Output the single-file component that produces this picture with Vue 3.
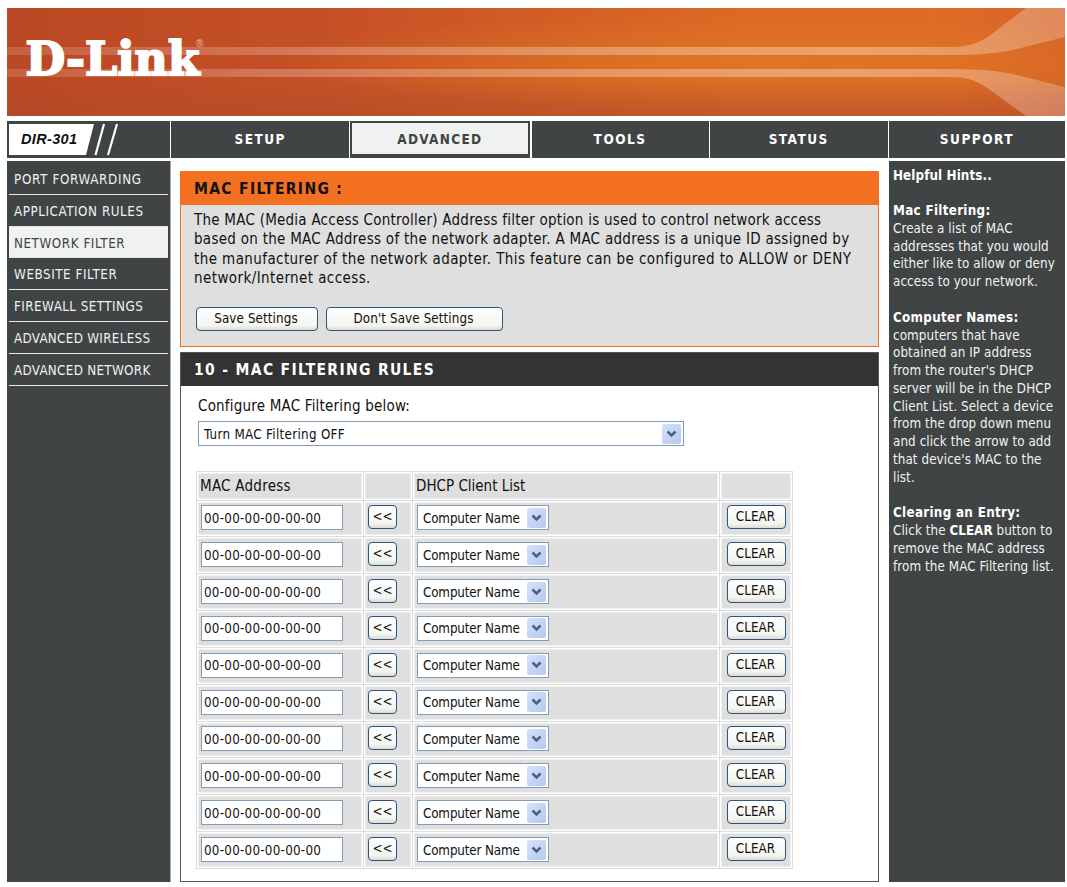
<script setup>
import { ref } from 'vue'

const tabs = ['SETUP', 'ADVANCED', 'TOOLS', 'STATUS', 'SUPPORT']
const activeTab = ref('ADVANCED')

const menu = [
  'PORT FORWARDING',
  'APPLICATION RULES',
  'NETWORK FILTER',
  'WEBSITE FILTER',
  'FIREWALL SETTINGS',
  'ADVANCED WIRELESS',
  'ADVANCED NETWORK'
]
const activeMenu = ref('NETWORK FILTER')

const description = [
  'The MAC (Media Access Controller) Address filter option is used to control network access',
  'based on the MAC Address of the network adapter. A MAC address is a unique ID assigned by',
  'the manufacturer of the network adapter. This feature can be configured to ALLOW or DENY',
  'network/Internet access.'
]

const rules = ref(
  Array.from({ length: 10 }, (_, i) => ({ id: i + 1, mac: '00-00-00-00-00-00' }))
)

const clearRule = (rule) => {
  rule.mac = '00-00-00-00-00-00'
}
</script>

<template>
  <div class="page">
    <header class="banner">
      <svg width="1058" height="108" viewBox="0 0 1058 108">
        <defs>
          <linearGradient id="base" x1="0" y1="0" x2="1" y2="0">
            <stop offset="0" stop-color="#ba4824" />
            <stop offset="0.3" stop-color="#c65026" />
            <stop offset="0.7" stop-color="#dc6a25" />
            <stop offset="0.88" stop-color="#de6b26" />
            <stop offset="1" stop-color="#d66428" />
          </linearGradient>
          <radialGradient id="glow" cx="0.7" cy="0.5" r="0.45">
            <stop offset="0" stop-color="#e27a22" stop-opacity="0.7" />
            <stop offset="1" stop-color="#e27a22" stop-opacity="0" />
          </radialGradient>
          <linearGradient id="shade" x1="0" y1="0" x2="0" y2="1">
            <stop offset="0.65" stop-color="#b04c2a" stop-opacity="0" />
            <stop offset="1" stop-color="#b04c2a" stop-opacity="0.6" />
          </linearGradient>
          <linearGradient id="beam" x1="0" y1="0" x2="1" y2="0">
            <stop offset="0" stop-color="#fff" stop-opacity="0.14" />
            <stop offset="0.3" stop-color="#fff" stop-opacity="0.24" />
            <stop offset="0.8" stop-color="#fff" stop-opacity="0.34" />
            <stop offset="1" stop-color="#fff" stop-opacity="0.24" />
          </linearGradient>
        </defs>
        <rect width="1058" height="108" fill="url(#base)" />
        <rect width="1058" height="108" fill="url(#glow)" />
        <rect width="1058" height="108" fill="url(#shade)" />
        <path d="M0 39H945C963 39 974 34 986 25L1019 0H1058V29L1010 41Q985 47 945 47H0Z" fill="url(#beam)" />
        <path d="M0 69H945C963 69 974 75 986 84L1019 108H1058V79L1010 67Q985 61 945 61H0Z" fill="url(#beam)" />
        <text class="logo" x="18.5" y="66.5" textLength="174" lengthAdjust="spacingAndGlyphs">D-Link</text>
        <text class="reg" x="189" y="39">®</text>
      </svg>
    </header>

    <nav class="tabs">
      <div class="model">
        <svg width="163" height="37" viewBox="0 0 163 37">
          <path d="M2 3H87L79 34H2Z" fill="#fff" />
          <path d="M97 3L88.5 34M110 3L101 34" stroke="#fff" stroke-width="2.2" />
          <text class="model-name" x="14" y="23" textLength="56">DIR-301</text>
        </svg>
      </div>
      <a
        v-for="tab in tabs"
        :key="tab"
        class="tab"
        :class="{ active: tab === activeTab }"
        @click="activeTab = tab"
      >
        <span>{{ tab }}</span>
      </a>
    </nav>

    <div class="columns">
      <aside class="sidebar">
        <a
          v-for="item in menu"
          :key="item"
          class="menu-item"
          :class="{ active: item === activeMenu }"
          @click="activeMenu = item"
        >{{ item }}</a>
      </aside>

      <main class="content">
        <section class="intro">
          <h1>MAC FILTERING :</h1>
          <div class="intro-body">
            <p>
              <span v-for="(line, i) in description" :key="i" class="line">{{ line }}</span>
            </p>
            <div class="intro-actions">
              <button class="btn save">Save Settings</button>
              <button class="btn discard">Don't Save Settings</button>
            </div>
          </div>
        </section>

        <section class="rules">
          <h2>10 - MAC FILTERING RULES</h2>
          <div class="rules-body">
            <div class="label">Configure MAC Filtering below:</div>
            <div class="select mode">
              <span>Turn MAC Filtering OFF</span>
              <i class="arrow">
                <svg width="11" height="8" viewBox="0 0 11 8">
                  <path d="M1.5 1.5L5.5 5.5L9.5 1.5" />
                </svg>
              </i>
            </div>

            <div class="table">
              <div class="row head">
                <div class="cell">MAC Address</div>
                <div class="cell"></div>
                <div class="cell">DHCP Client List</div>
                <div class="cell"></div>
              </div>
              <div v-for="rule in rules" :key="rule.id" class="row">
                <div class="cell"><input v-model="rule.mac" class="mac" /></div>
                <div class="cell"><button class="btn copy">&lt;&lt;</button></div>
                <div class="cell">
                  <div class="select client">
                    <span>Computer Name</span>
                    <i class="arrow">
                      <svg width="11" height="8" viewBox="0 0 11 8">
                        <path d="M1.5 1.5L5.5 5.5L9.5 1.5" />
                      </svg>
                    </i>
                  </div>
                </div>
                <div class="cell"><button class="btn clear" @click="clearRule(rule)">CLEAR</button></div>
              </div>
            </div>
          </div>
        </section>
      </main>

      <aside class="hints">
        <b>Helpful Hints..</b><br /><br />
        <b>Mac Filtering:</b><br />
        Create a list of MAC<br />
        addresses that you would<br />
        either like to allow or deny<br />
        access to your network.<br /><br />
        <b>Computer Names:</b><br />
        computers that have<br />
        obtained an IP address<br />
        from the router's DHCP<br />
        server will be in the DHCP<br />
        Client List. Select a device<br />
        from the drop down menu<br />
        and click the arrow to add<br />
        that device's MAC to the<br />
        list.<br /><br />
        <b>Clearing an Entry:</b><br />
        Click the <b class="inline">CLEAR</b> button to<br />
        remove the MAC address<br />
        from the MAC Filtering list.
      </aside>
    </div>
  </div>
</template>

<style>
body {
  background: #fff;
}
</style>

<style scoped>
* {
  box-sizing: border-box;
}

.page {
  width: 1067px;
  height: 887px;
  padding: 8px 2px 5px 7px;
  overflow: hidden;
  background: #fff;
  color: #111;
  font-family: Tahoma, 'DejaVu Sans Condensed', 'DejaVu Sans', sans-serif;
  font-stretch: condensed;
  white-space: nowrap;
}

.banner {
  height: 108px;
}

.banner svg,
.model svg {
  display: block;
}

.logo {
  font: bold 46px 'DejaVu Serif', serif;
  fill: #fff;
  stroke: #fff;
  stroke-width: 2px;
}

.reg {
  font: 10px 'Liberation Sans', sans-serif;
  fill: #e9b8a2;
}

.tabs {
  display: grid;
  grid-template-columns: 163px 178px 180px 177px 178px 176px;
  column-gap: 1.2px;
  height: 37px;
  margin-top: 5px;
}

.model,
.tab {
  background: #404444;
}

.model-name {
  font: italic bold 14.5px 'Liberation Sans', sans-serif;
  fill: #111;
}

.tab {
  display: flex;
  align-items: center;
  justify-content: center;
  padding-bottom: 1px;
  color: #fff;
  font-size: 13.5px;
  font-weight: bold;
  letter-spacing: 1.5px;
  cursor: pointer;
}

.tab.active {
  padding: 0 1px 0 0;
  border: 2px solid #404444;
  border-bottom-width: 4px;
  background: #f0f2f1;
  color: #404444;
  letter-spacing: 1.3px;
}

.columns {
  display: flex;
  height: 721px;
  margin-top: 3px;
}

.sidebar {
  width: 163px;
  padding: 2px 2px 0;
  background: #404444;
}

.menu-item {
  display: block;
  height: 31.8px;
  padding-left: 5px;
  border-bottom: 1px solid #e4e6e5;
  color: #f0f2f1;
  font-size: 13.3px;
  line-height: 33px;
  letter-spacing: 0.55px;
  cursor: pointer;
}

.menu-item:first-child {
  letter-spacing: 0.67px;
}

.menu-item:nth-child(5) {
  letter-spacing: 0.45px;
}

.menu-item:nth-child(n + 6) {
  letter-spacing: 0.3px;
}

.menu-item.active {
  background: #f0f2f1;
  color: #404444;
}

.content {
  width: 719px;
  padding: 10px 10px 0 9px;
  border-left: 1px solid #a8a8a8;
}

.intro {
  height: 176px;
  border: 1px solid #f37021;
  background: #dfdfdf;
}

.intro h1,
.rules h2 {
  margin: 0;
  height: 33px;
  padding-left: 13px;
  font-size: 15.5px;
  line-height: 35px;
  letter-spacing: 1.33px;
}

.intro h1 {
  background: #f37021;
  color: #111;
}

.intro-body {
  padding: 6px 13px 0;
}

.intro p {
  margin: 0;
  font-size: 15px;
  line-height: 19.3px;
}

.line {
  display: block;
  letter-spacing: 0.24px;
}

.line:nth-child(2) {
  letter-spacing: 0.28px;
}

.line:nth-child(n + 3) {
  letter-spacing: 0.41px;
}

.intro-actions {
  display: flex;
  gap: 8px;
  margin: 19px 0 0 2px;
}

.btn {
  display: block;
  height: 24px;
  padding: 0;
  border: 1px solid #2c5580;
  border-radius: 4px;
  background: linear-gradient(#fff, #f4f4f0 80%, #dcdad2);
  color: #111;
  font-family: inherit;
  font-stretch: inherit;
  font-size: 13.3px;
  line-height: 20px;
}

.save {
  width: 122px;
  padding-right: 2px;
  letter-spacing: 0.1px;
}

.discard {
  width: 177px;
  padding-right: 2px;
  letter-spacing: 0.1px;
}

.rules {
  height: 530px;
  margin-top: 5px;
  border: 1px solid #555;
}

.rules h2 {
  background: #333;
  color: #fff;
}

.rules-body {
  padding: 10px 0 0 15px;
}

.label {
  padding-left: 2px;
  font-size: 15px;
  line-height: 20px;
  letter-spacing: 0.2px;
}

.select {
  display: flex;
  align-items: center;
  justify-content: space-between;
  height: 25px;
  padding: 1px 2px 1px 5px;
  border: 1px solid #7f9db9;
  background: #fff;
  font-size: 13.3px;
}

.mode {
  width: 486px;
  margin: 5px 0 0 2px;
  letter-spacing: 0.3px;
}

.select span {
  padding-top: 1px;
}

.arrow {
  display: flex;
  align-items: center;
  justify-content: center;
  width: 19px;
  height: 20px;
  border-radius: 2px;
  background: linear-gradient(135deg, #d6e2fa, #b4c8f0);
}

.arrow path {
  fill: none;
  stroke: #4d6185;
  stroke-width: 2.5;
}

.table {
  width: 597px;
  margin-top: 25px;
  border-top: 1px solid #ddd;
  border-left: 1px solid #ddd;
}

.row {
  display: grid;
  grid-template-columns: 167px 49px 307px 73px;
  height: 36.85px;
}

.head {
  height: 28.5px;
  font-size: 15px;
  letter-spacing: 0.25px;
}

.cell {
  display: flex;
  align-items: center;
  padding: 0 0 1px 4px;
  border-right: 1px solid #ddd;
  border-bottom: 1px solid #ddd;
  box-shadow: inset 0 0 0 1.5px #fff;
  background: #dfdfdf;
}

.cell .btn {
  margin-bottom: 1px;
}

.head .cell {
  padding: 0 0 0 3px;
}

.head .cell:nth-child(3) {
  letter-spacing: 0;
}

.mac {
  width: 142px;
  height: 25px;
  padding: 1px 2px 0;
  border: 1px solid #7f9db9;
  background: #fff;
  color: #111;
  font-family: inherit;
  font-stretch: inherit;
  font-size: 13.3px;
  letter-spacing: 0.25px;
}

.client {
  width: 132px;
  letter-spacing: -0.15px;
}

.copy {
  width: 29px;
}

.cell .clear {
  width: 59px;
  margin-left: 3px;
  padding-right: 2px;
  letter-spacing: 0.1px;
}

.hints {
  width: 176px;
  padding: 5.5px 0 0 4px;
  background: #404444;
  color: #f0f2f1;
  font-size: 13.3px;
  line-height: 17.78px;
  letter-spacing: 0.08px;
}

.hints b {
  color: #fff;
  letter-spacing: 0.3px;
}

.hints b:first-child {
  letter-spacing: 0.1px;
}

.hints b.inline {
  letter-spacing: 0;
}
</style>
